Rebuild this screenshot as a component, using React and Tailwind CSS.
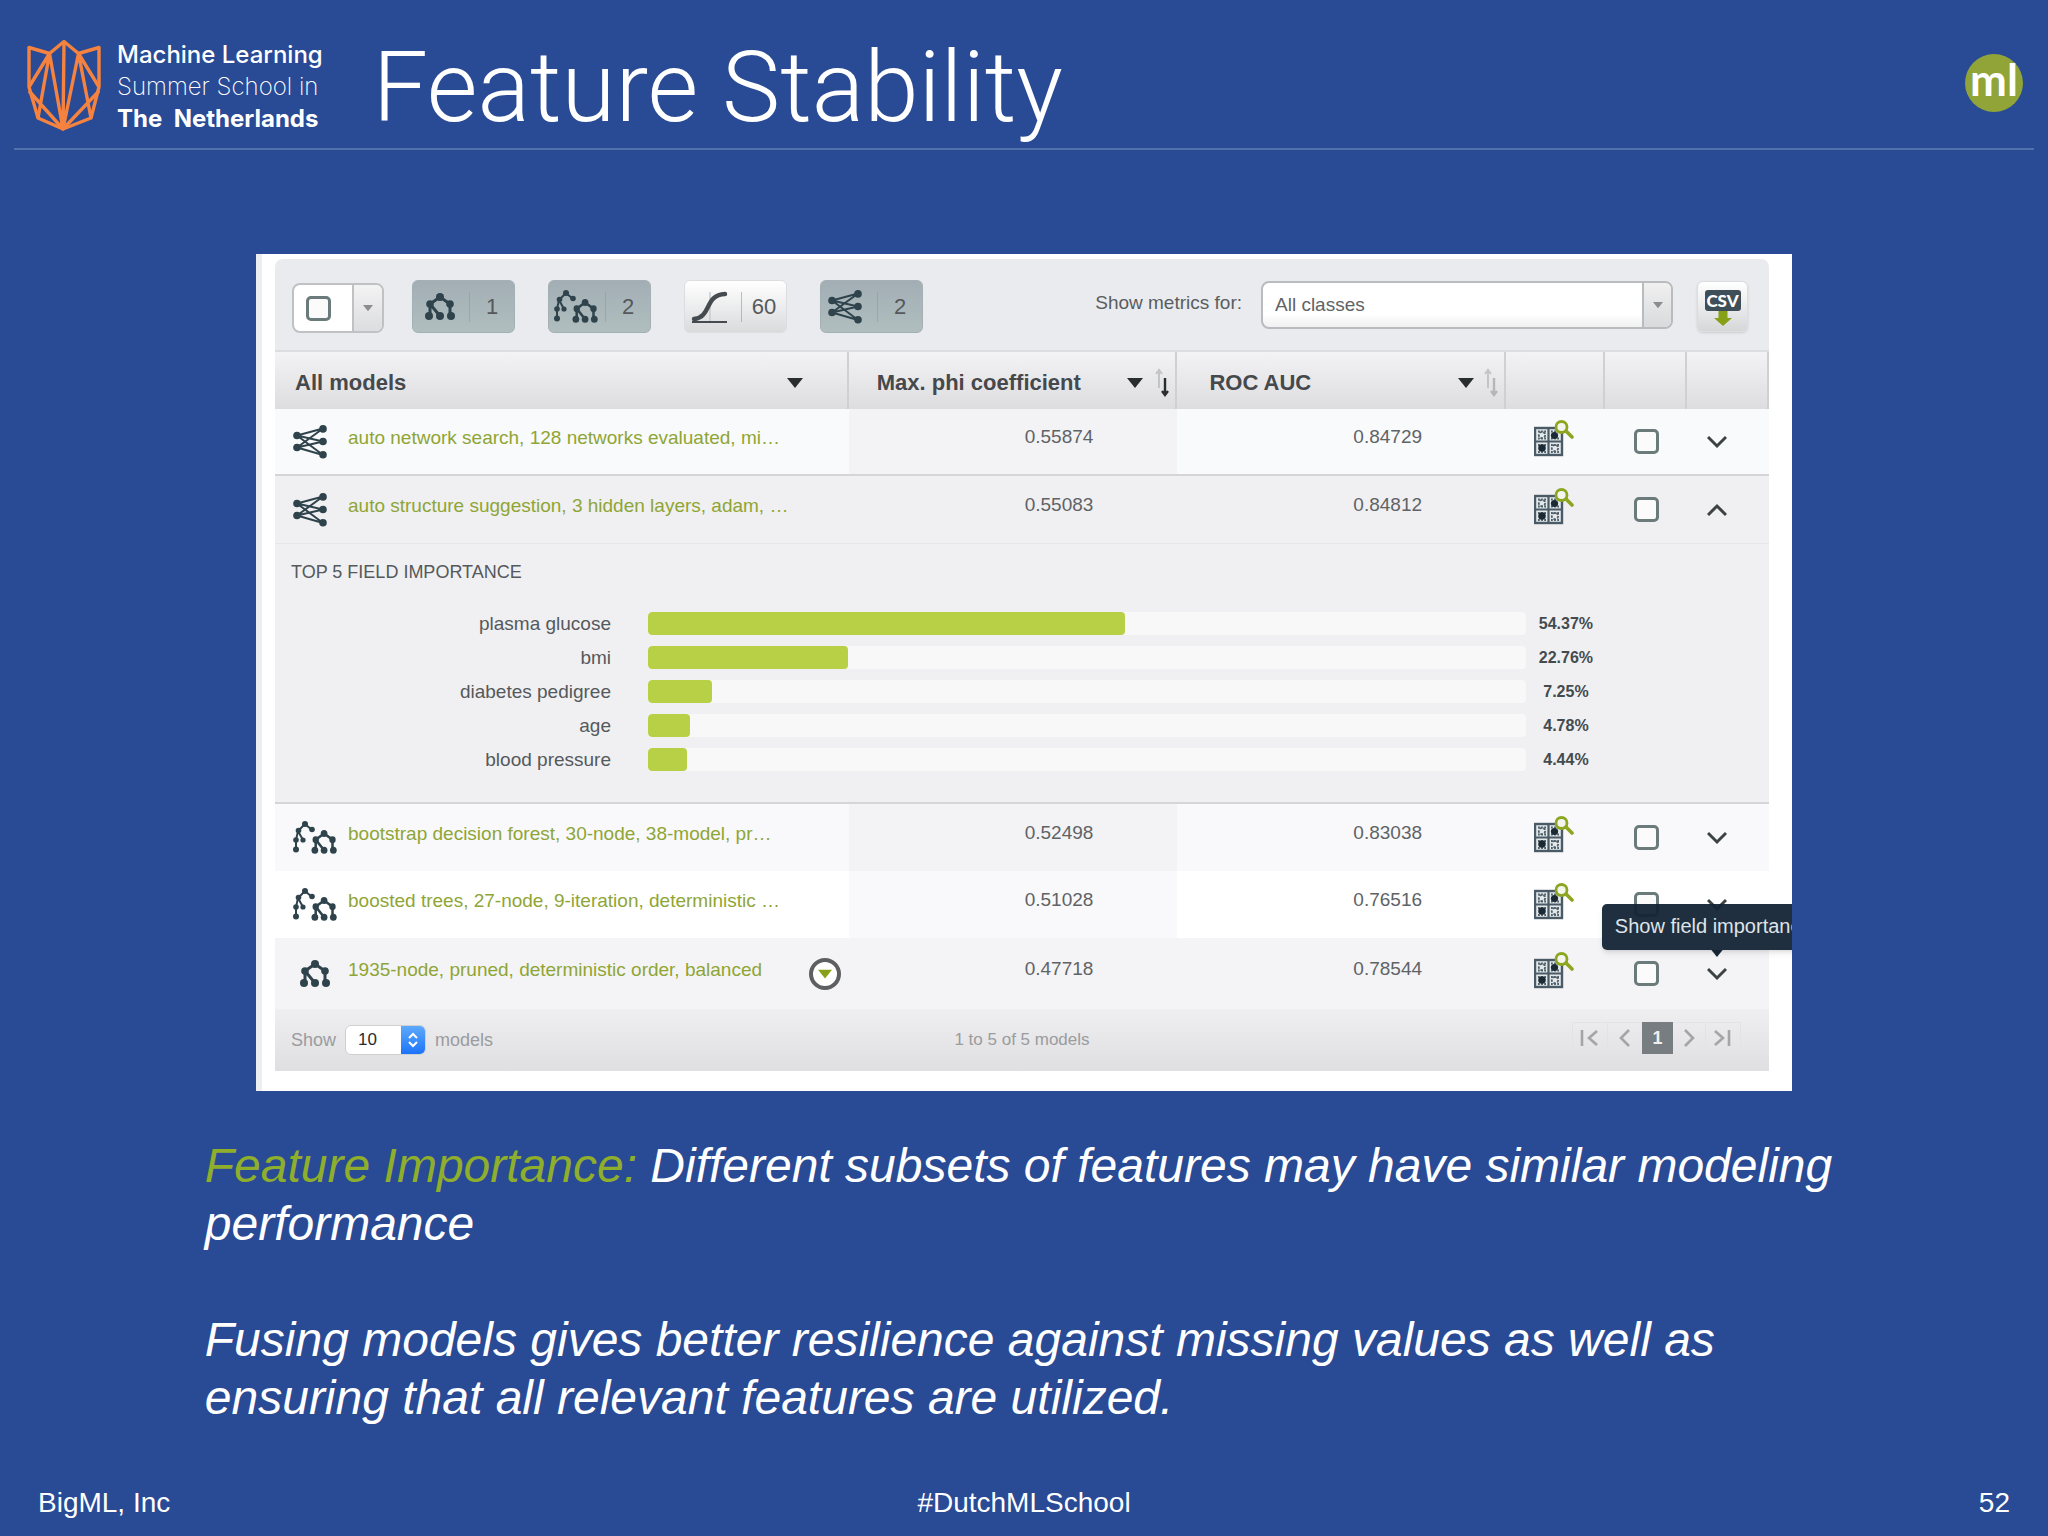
import React, { useState } from "react";

const models = [
  { id: 1, kind: "network", name: "auto network search, 128 networks evaluated, mi…", phi: "0.55874", auc: "0.84729", tone: "bg-[#f9fafb]", phiTone: "bg-[#f3f3f5]" },
  { id: 2, kind: "network", name: "auto structure suggestion, 3 hidden layers, adam, …", phi: "0.55083", auc: "0.84812", tone: "bg-[#f0f0f2]", phiTone: "bg-[#f0f0f2]" },
  { id: 3, kind: "forest", name: "bootstrap decision forest, 30-node, 38-model, pr…", phi: "0.52498", auc: "0.83038", tone: "bg-[#f9f9fb]", phiTone: "bg-[#f3f3f5]" },
  { id: 4, kind: "forest", name: "boosted trees, 27-node, 9-iteration, deterministic …", phi: "0.51028", auc: "0.76516", tone: "bg-white", phiTone: "bg-[#f9f9fb]" },
  { id: 5, kind: "tree", name: "1935-node, pruned, deterministic order, balanced", phi: "0.47718", auc: "0.78544", tone: "bg-[#f4f4f6]", phiTone: "bg-[#f4f4f6]" },
];

const importance = [
  { field: "plasma glucose", value: 54.37 },
  { field: "bmi", value: 22.76 },
  { field: "diabetes pedigree", value: 7.25 },
  { field: "age", value: 4.78 },
  { field: "blood pressure", value: 4.44 },
];

const filters = [
  { kind: "tree", count: 1, active: true },
  { kind: "forest", count: 2, active: true },
  { kind: "curve", count: 60, active: false },
  { kind: "network", count: 2, active: true },
];

const SchoolLogo = () => (
  <svg viewBox="26 38 76 94" className="h-[94px] w-[76px] shrink-0" fill="none" stroke="#f5833f" strokeWidth="3.4" strokeLinejoin="round">
    <path d="M29 47.5 L49.5 53.5 L64 41.5 L78.5 53.5 L99 47.5 V87 L91 118 L63 129 L38 118 L29 87 Z" />
    <path d="M49.5 53.5 L29 87 M49.5 53.5 L38 118 M49.5 53.5 L63 129 M64 41.5 L63 129 M78.5 53.5 L63 129 M78.5 53.5 L91 118 M78.5 53.5 L99 87 M29 91 L63 129 L99 91" />
  </svg>
);

const NetworkIcon = () => (
  <svg viewBox="0 0 34 34" className="h-[34px] w-[34px]" fill="#2f434c" stroke="#2f434c" strokeWidth="2">
    <path fill="none" d="M4 10.5 L30 3.5 M4 10.5 L30 16.5 M4 10.5 L30 30 M4 22.5 L30 3.5 M4 22.5 L30 16.5 M4 22.5 L30 30" />
    <g stroke="none">
      <circle cx="4" cy="10.5" r="3.8" />
      <circle cx="4" cy="22.5" r="3.8" />
      <circle cx="30" cy="3.9" r="3.8" />
      <circle cx="30" cy="16.5" r="3.8" />
      <circle cx="30" cy="29.8" r="3.8" />
    </g>
  </svg>
);

const TreeShape = () => (
  <>
    <path fill="none" d="M15 4 L5 11 V23 M15 4 L25 11 V23 M5 11 L15 23" strokeWidth="3" />
    <g stroke="none">
      <circle cx="15" cy="4" r="4" />
      <circle cx="5" cy="11" r="3.8" />
      <circle cx="25" cy="11" r="3.8" />
      <circle cx="4" cy="23" r="4" />
      <circle cx="15" cy="23" r="4" />
      <circle cx="26" cy="23" r="4" />
    </g>
  </>
);

const TreeIcon = () => (
  <svg viewBox="0 0 30 28" className="h-[28px] w-[30px]" fill="#2f434c" stroke="#2f434c">
    <TreeShape />
  </svg>
);

const ForestIcon = () => (
  <svg viewBox="0 0 44 34" className="h-[34px] w-[44px]" fill="#2f434c" stroke="#2f434c">
    <path fill="none" d="M12 3 L5 10 L3 19 V29 M12 3 L19 9 M5 10 L10 19" strokeWidth="2" />
    <g stroke="none">
      <circle cx="12" cy="3" r="3" />
      <circle cx="5.5" cy="9.5" r="2.8" />
      <circle cx="19" cy="8.5" r="2.8" />
      <circle cx="3" cy="19" r="2.8" />
      <circle cx="10" cy="19" r="2.6" />
      <circle cx="3" cy="28.5" r="3" />
    </g>
    <g transform="translate(18.5 9) scale(0.84 0.88)">
      <TreeShape />
    </g>
  </svg>
);

const CurveIcon = () => (
  <svg viewBox="0 0 38 34" className="h-[34px] w-[38px]" fill="none" stroke="#454b4f">
    <path d="M20 2 V32" stroke="#c9cbcd" strokeWidth="1.5" />
    <path d="M2 32 H37" strokeWidth="2" />
    <path d="M4 29 C22 27 14 5 35 4" strokeWidth="4.4" strokeLinecap="round" />
  </svg>
);

const ModelIcon = ({ kind }) => {
  if (kind === "network") return <NetworkIcon />;
  if (kind === "forest") return <ForestIcon />;
  if (kind === "curve") return <CurveIcon />;
  return <TreeIcon />;
};

const MatrixIcon = () => (
  <svg viewBox="0 0 40 38" className="h-[38px] w-[40px]" fill="none">
    <rect x="1" y="9" width="27" height="27" fill="#e3e8ea" stroke="#4a5a66" strokeWidth="2.4" />
    <path d="M14.5 9 V36 M1 22.5 H28" stroke="#4a5a66" strokeWidth="2.2" />
    <g stroke="#4f5f6a" strokeWidth="1.8">
      <circle cx="8" cy="16" r="3.2" strokeDasharray="2.5 1.5" />
      <circle cx="21" cy="29" r="3.2" strokeDasharray="2.5 1.5" />
      <path d="M4 12.5 H12 M4 19.5 H12 M17 12.5 H25 M17 19.5 H25 M4 26 H12 M4 33 H12 M17 26 H25 M17 33 H25" strokeDasharray="1.8 1.3" />
    </g>
    <circle cx="20.5" cy="16.5" r="3.6" fill="#1c2a35" />
    <circle cx="8" cy="29" r="3.8" fill="#1c2a35" />
    <circle cx="27.5" cy="8" r="5.5" fill="#f4f6ee" stroke="#8da622" strokeWidth="2.8" />
    <path d="M32 12 L38 18" stroke="#8da622" strokeWidth="3.6" strokeLinecap="round" />
  </svg>
);

const Triangle = ({ className }) => (
  <svg viewBox="0 0 16 10" className={className} fill="currentColor">
    <path d="M0 0 H16 L8 10 Z" />
  </svg>
);

const SortArrows = ({ down }) => (
  <svg viewBox="0 0 16 30" className="h-[30px] w-4" fill="none" strokeWidth="2">
    <path d="M4 20 V2 M1 6 L4 2 L7 6" stroke="#c3c4c8" />
    <path d="M10 10 V27 M7 23 L10 27 L13 23" stroke={down} strokeWidth="2.4" />
  </svg>
);

const Chevron = ({ up }) => (
  <svg viewBox="0 0 20 14" className="h-[14px] w-5" fill="none" stroke="#3d4245" strokeWidth="3">
    <path d={up ? "M1 12 L10 3 L19 12" : "M1 2 L10 11 L19 2"} />
  </svg>
);

const PagerIcon = ({ d }) => (
  <svg viewBox="0 0 20 18" className="h-[18px] w-5" fill="none" stroke="#a3a5a8" strokeWidth="2.6">
    <path d={d} />
  </svg>
);

const CheckBox = ({ label }) => (
  <input
    type="checkbox"
    aria-label={label}
    className="block size-[25px] shrink-0 appearance-none rounded-[5px] border-3 border-[#6b7a7a] bg-[#fbfbfb] checked:bg-[#8da622]"
  />
);

const Toolbar = () => (
  <div className="flex items-start border-b-2 border-[#dcdde0] bg-[#e9ebee] pt-[21px] pb-[17px] pl-[17px] pr-[21px]">
    <div className="mt-[3px] flex h-[50px] w-[92px] overflow-hidden rounded-lg border-2 border-[#bfc1c4] bg-white">
      <span className="flex flex-1 items-center pl-3">
        <CheckBox label="Select all models" />
      </span>
      <button aria-label="Selection menu" className="flex w-[30px] items-center justify-center border-l-2 border-[#bfc1c4] bg-gradient-to-b from-[#f3f3f4] to-[#dcdddf] text-[#8a8c8f]">
        <Triangle className="h-2 w-[10px]" />
      </button>
    </div>
    <div className="ml-7 flex gap-[33px]">
      {filters.map((f) => (
        <button
          key={f.kind}
          className={
            f.active
              ? "flex h-[53px] w-[103px] items-center rounded-md border border-[#a3b0b5] bg-gradient-to-b from-[#a2aeb4] to-[#b0bebf]"
              : "flex h-[53px] w-[103px] items-center rounded-md border border-[#dcdddf] bg-gradient-to-b from-white to-[#dadbdd]"
          }
        >
          <span className={f.kind === "network" ? "flex w-[56px] pl-[7px]" : f.kind === "curve" ? "flex w-[56px] pl-[5px]" : "flex w-[56px] justify-center pr-[2px]"}>
            <ModelIcon kind={f.kind} />
          </span>
          <span className="h-[30px] w-px bg-[#8d999e]/60" />
          <span className="flex-1 text-[22px] leading-6 text-[#55595c]">{f.count}</span>
        </button>
      ))}
    </div>
    <label htmlFor="metrics" className="mt-[11px] ml-auto text-[19px] leading-6 text-[#5a5d60]">
      Show metrics for:
    </label>
    <div className="relative mt-px ml-[19px] h-[48px] w-[412px]">
      <select
        id="metrics"
        className="h-full w-full appearance-none rounded-lg border-2 border-[#b9bbbe] bg-gradient-to-b from-white from-70% to-[#f0f0f1] pl-3 text-[19px] text-[#606366]"
      >
        <option>All classes</option>
      </select>
      <span className="pointer-events-none absolute inset-y-[2px] right-[2px] flex w-[29px] items-center justify-center rounded-r-md border-l-2 border-[#b9bbbe] bg-gradient-to-b from-[#f0f0f1] to-[#d9dadc] text-[#8a8c8f]">
        <Triangle className="h-2 w-[10px]" />
      </span>
    </div>
    <button aria-label="Download CSV" className="mt-px ml-6 flex h-[51px] w-[51px] flex-col items-center rounded-md border border-[#dcdddf] bg-gradient-to-b from-white to-[#d6d7d9] pt-2 shadow-sm">
      <span className="h-[21px] w-[36px] rounded-[3px] bg-[#3f4f5a] text-center font-[Lato] text-[17px] leading-[21px] font-black text-white">CSV</span>
      <svg viewBox="0 0 18 15" className="h-[15px] w-[18px]" fill="#86a117">
        <path d="M4.5 0 H13.5 V7 H18 L9 15 L0 7 H4.5 Z" />
      </svg>
    </button>
  </div>
);

const FieldImportance = () => (
  <div className="h-[261px] border-t border-b-2 border-t-[#e6e6e9] border-b-[#d5d5d8] bg-[#f0f0f2] pt-4 pl-4">
    <h2 className="text-[18px] leading-6 text-[#55595c]">TOP 5 FIELD IMPORTANCE</h2>
    <ul className="mt-7 flex flex-col gap-[11px]">
      {importance.map((row) => (
        <li key={row.field} className="flex h-[23px] items-center">
          <span className="w-[320px] text-right text-[19px] leading-6 text-[#55595c]">{row.field}</span>
          <div className="ml-[37px] h-full w-[59.4%] overflow-hidden rounded-sm bg-[#f8f8f9]">
            <div className="h-full rounded-sm bg-[#b8d046]" style={{ width: `${row.value}%` }} />
          </div>
          <span className="ml-2 w-16 text-center text-[16px] leading-6 font-bold text-[#444b4f]">{row.value.toFixed(2)}%</span>
        </li>
      ))}
    </ul>
  </div>
);

const ModelRow = ({ model, open, onToggle }) => {
  const last = model.id === 5;
  const edge = model.id === 1 ? "border-b-2 border-[#d5d5d8]" : "";
  return (
    <>
      <tr className={`${last ? "h-[71px]" : "h-[67px]"} ${model.tone}`}>
        <td className={`${edge} pl-[18px]`}>
          <div className="flex items-center">
            <span className={`mr-[11px] flex w-11 ${model.kind === "tree" ? "justify-center" : ""}`}>
              <ModelIcon kind={model.kind} />
            </span>
            <a href="#model" className="pb-2 text-[19px] leading-6 whitespace-nowrap text-[#8fa535]">{model.name}</a>
            {last && (
              <button aria-label="Model actions" className="mr-2 ml-auto flex size-8 items-center justify-center rounded-full border-4 border-[#5d5f61] bg-white text-[#86a117]">
                <Triangle className="h-[10px] w-[14px]" />
              </button>
            )}
          </div>
        </td>
        <td className={`${edge} ${model.phiTone} pr-[84px] pb-2 text-right text-[19px] text-[#606366]`}>{model.phi}</td>
        <td className={`${edge} pr-[84px] pb-2 text-right text-[19px] text-[#606366]`}>{model.auc}</td>
        <td className={edge}>
          <button aria-label="Confusion matrix" className="ml-7 block pb-2">
            <MatrixIcon />
          </button>
        </td>
        <td className={edge}>
          <div className="pl-[29px]">
            <CheckBox label={`Select ${model.name}`} />
          </div>
        </td>
        <td className={`${edge} relative`}>
          <button aria-label="Show field importance" onClick={onToggle} className="ml-5 block">
            <Chevron up={open} />
          </button>
          {last && (
            <div role="tooltip" className="absolute top-[-34px] left-[-85px] z-10 rounded-[5px] bg-[#142435]/95 px-[13px] pt-[10px] pb-3 text-[20px] leading-6 whitespace-nowrap text-[#dfe4e8] shadow-md">
              Show field importance
              <Triangle className="absolute top-full left-[107px] h-[7px] w-4 text-[#142435]" />
            </div>
          )}
        </td>
      </tr>
      {open && (
        <tr>
          <td colSpan={6} className="p-0">
            <FieldImportance />
          </td>
        </tr>
      )}
    </>
  );
};

const TableFooter = () => (
  <div className="grid h-[62px] grid-cols-3 items-center bg-gradient-to-b from-[#efeff1] to-[#dfdee0] pr-7 pl-4 text-[18px] text-[#9a9c9f]">
    <div className="flex items-center">
      <label htmlFor="page-size">Show</label>
      <div className="relative mx-[9px] h-[30px] w-[81px] overflow-hidden rounded-md border border-[#cfd0d2] bg-white">
        <select id="page-size" className="h-full w-full appearance-none pl-3 text-[17px] text-[#2b2b2e]">
          <option>10</option>
        </select>
        <span className="pointer-events-none absolute inset-y-0 right-0 flex w-6 items-center justify-center bg-gradient-to-b from-[#5ea9fb] to-[#1b73f9]">
          <svg viewBox="0 0 12 18" className="h-[18px] w-3" fill="none" stroke="white" strokeWidth="2">
            <path d="M2 7 L6 3 L10 7 M2 11 L6 15 L10 11" />
          </svg>
        </span>
      </div>
      <span>models</span>
    </div>
    <p className="pl-3 text-center text-[17px]">1 to 5 of 5 models</p>
    <nav className="flex items-center justify-end pb-1">
      <button aria-label="First page" className="flex h-8 w-9 items-center justify-center border border-[#e3e3e5]">
        <PagerIcon d="M2 1 V17 M17 2 L9 9 L17 16" />
      </button>
      <button aria-label="Previous page" className="flex h-8 w-[34px] items-center justify-center border-y border-[#e3e3e5]">
        <PagerIcon d="M14 1 L6 9 L14 17" />
      </button>
      <button className="h-8 w-[31px] bg-[#777d80] text-[18px] font-bold text-[#eef0f0]">1</button>
      <button aria-label="Next page" className="flex h-8 w-8 items-center justify-center border-y border-[#e3e3e5]">
        <PagerIcon d="M6 1 L14 9 L6 17" />
      </button>
      <button aria-label="Last page" className="flex h-8 w-9 items-center justify-center border border-[#e3e3e5]">
        <PagerIcon d="M2 2 L10 9 L2 16 M16 1 V17" />
      </button>
    </nav>
  </div>
);

const headCell = "border-r-2 border-[#cfd0d3] bg-gradient-to-b from-[#f3f3f5] to-[#dddde0] p-0";

const ModelsPanel = () => {
  const [openId, setOpenId] = useState(2);

  return (
    <section className="mx-[12.5%] mt-[104px] overflow-hidden border-l-6 border-[#eceef2] bg-white pt-[5px] pr-[17px] pb-5 pl-[13px]">
      <div className="mr-[6px]">
        <div className="overflow-hidden rounded-t-lg">
          <Toolbar />
        </div>
        <table className="w-full table-fixed border-separate border-spacing-0">
          <colgroup>
            <col className="w-[38.4%]" />
            <col className="w-[22%]" />
            <col className="w-[22%]" />
            <col className="w-[6.6%]" />
            <col className="w-[5.5%]" />
            <col className="w-[5.5%]" />
          </colgroup>
          <thead>
            <tr className="h-[57px] text-left text-[22px] text-[#46494c]">
              <th className={headCell}>
                <div className="flex items-center justify-between pt-1 pr-11 pl-5">
                  All models
                  <Triangle className="h-[10px] w-4 text-[#2a2d30]" />
                </div>
              </th>
              <th className={headCell}>
                <div className="flex items-center pt-1 pr-1 pl-7 whitespace-nowrap">
                  Max. phi coefficient
                  <Triangle className="mr-3 ml-auto h-[10px] w-4 text-[#2a2d30]" />
                  <SortArrows down="#2a2d30" />
                </div>
              </th>
              <th className={headCell}>
                <div className="flex items-center pt-1 pr-1 pl-8 whitespace-nowrap">
                  ROC AUC
                  <Triangle className="mr-[10px] ml-auto h-[10px] w-4 text-[#2a2d30]" />
                  <SortArrows down="#b4b6b9" />
                </div>
              </th>
              <th className={headCell} />
              <th className={headCell} />
              <th className={headCell} />
            </tr>
          </thead>
          <tbody>
            {models.map((m) => (
              <ModelRow
                key={m.id}
                model={m}
                open={openId === m.id}
                onToggle={() => setOpenId(openId === m.id ? null : m.id)}
              />
            ))}
          </tbody>
        </table>
        <TableFooter />
      </div>
    </section>
  );
};

const App = () => (
  <div className="flex min-h-screen flex-col bg-[#294a95] font-['Liberation_Sans',Arial,sans-serif] text-white">
    <header className="mx-[14px] flex h-[150px] items-center border-b-2 border-[#5072ab] pr-[11px] pl-3">
      <div className="flex items-center pt-[22px]">
        <SchoolLogo />
        <div className="ml-[15px] pt-1 font-[Inter,sans-serif] text-[24px] leading-8 whitespace-nowrap">
          <p className="font-medium">Machine Learning</p>
          <p className="font-extralight">Summer School in</p>
          <p className="font-bold">The{"\u00a0 "}Netherlands</p>
        </div>
      </div>
      <h1 className="ml-[50px] pt-7 font-[Roboto,sans-serif] text-[98px] leading-none font-light whitespace-nowrap">Feature Stability</h1>
      <div className="mt-[18px] ml-auto flex size-[58px] items-center justify-center rounded-full bg-[#90a438] pb-2 font-[Lato,sans-serif] text-[44px] leading-none font-bold">
        ml
      </div>
    </header>

    <ModelsPanel />

    <div className="mx-[10%] mt-[46px] text-[48px] leading-[58px] italic">
      <p>
        <span className="text-[#8fae2c]">Feature Importance:</span> Different subsets of features may have similar modeling performance
      </p>
      <p className="mt-[58px]">Fusing models gives better resilience against missing values as well as ensuring that all relevant features are utilized.</p>
    </div>

    <footer className="mt-auto grid grid-cols-3 px-[38px] pb-[17px] text-[28px] leading-8">
      <span>BigML, Inc</span>
      <span className="text-center">#DutchMLSchool</span>
      <span className="text-right">52</span>
    </footer>
  </div>
);

export default App;
